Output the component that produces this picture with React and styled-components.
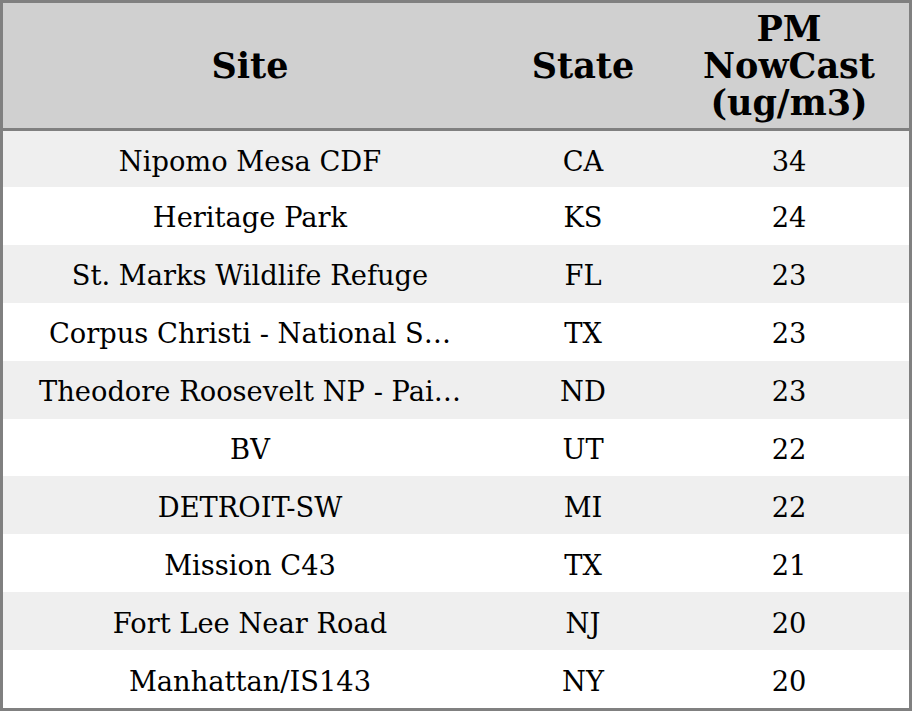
import React from "react";
import styled, { createGlobalStyle } from "styled-components";

const rows = [
  { site: "Nipomo Mesa CDF", state: "CA", pm: 34 },
  { site: "Heritage Park", state: "KS", pm: 24 },
  { site: "St. Marks Wildlife Refuge", state: "FL", pm: 23 },
  { site: "Corpus Christi - National Seashore", state: "TX", pm: 23 },
  { site: "Theodore Roosevelt NP - Painted Canyon", state: "ND", pm: 23 },
  { site: "BV", state: "UT", pm: 22 },
  { site: "DETROIT-SW", state: "MI", pm: 22 },
  { site: "Mission C43", state: "TX", pm: 21 },
  { site: "Fort Lee Near Road", state: "NJ", pm: 20 },
  { site: "Manhattan/IS143", state: "NY", pm: 20 },
];

const MAX_LEN = 27;
const shorten = (s) => (s.length > MAX_LEN ? s.slice(0, MAX_LEN) + "\u2026" : s);

const GlobalStyle = createGlobalStyle`
  html, body {
    margin: 0;
    padding: 0;
    background: #ffffff;
  }
  body {
    font-family: "DejaVu Serif", "Liberation Serif", serif;
  }
`;

const Table = styled.div`
  width: 912px;
  height: 711px;
  box-sizing: border-box;
  border: 3px solid #808080;
  display: grid;
  grid-template-columns: 494px 172px 1fr;
  grid-template-rows: 128px 56px repeat(9, 1fr);
  overflow: hidden;
`;

const HeadCell = styled.div`
  display: flex;
  align-items: center;
  justify-content: center;
  text-align: center;
  background: #d0d0d0;
  border-bottom: 3px solid #808080;
  color: #000;
  font-size: 35px;
  font-weight: bold;
  line-height: 37px;
  padding: 0 16px;
`;

const Cell = styled.div`
  display: flex;
  align-items: center;
  justify-content: center;
  background: ${(p) => (p.$odd ? "#efefef" : "#ffffff")};
  color: #000;
  font-size: 27.3px;
  white-space: nowrap;
  padding-top: 4px;
  min-width: 0;
`;

export default function App() {
  return (
    <>
      <GlobalStyle />
      <Table>
        <HeadCell>Site</HeadCell>
        <HeadCell>State</HeadCell>
        <HeadCell>
          PM
          <br />
          NowCast
          <br />
          (ug/m3)
        </HeadCell>
        {rows.map((r, i) => (
          <React.Fragment key={r.site}>
            <Cell $odd={i % 2 === 0}>{shorten(r.site)}</Cell>
            <Cell $odd={i % 2 === 0}>{r.state}</Cell>
            <Cell $odd={i % 2 === 0}>{r.pm}</Cell>
          </React.Fragment>
        ))}
      </Table>
    </>
  );
}
